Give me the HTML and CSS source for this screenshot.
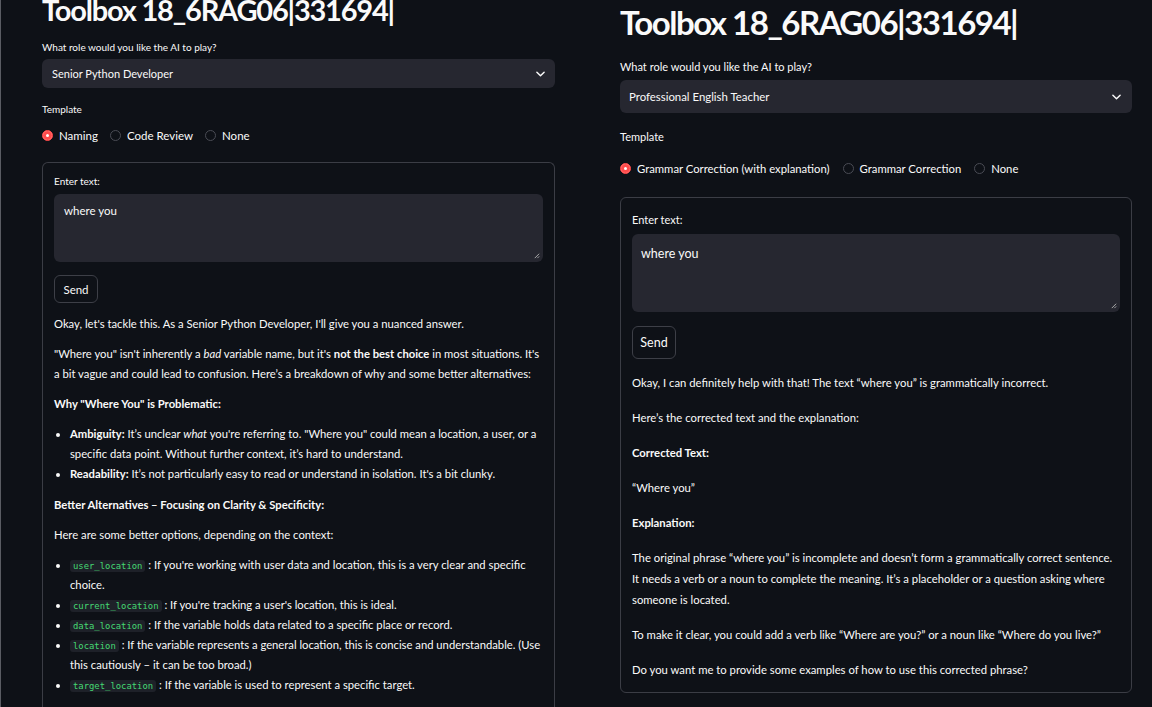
FILE: index.html
```html
<!DOCTYPE html>
<html lang="en">
<head>
<meta charset="utf-8">
<title>Toolbox</title>
<link rel="stylesheet" href="styles.css">
</head>
<body>
<div class="page">
  <section class="app app-left">
    <h1 class="title">Toolbox 18_6RAG06|331694|</h1>
    <div class="lbl lbl-role">What role would you like the AI to play?</div>
    <div class="select">
      <span>Senior Python Developer</span>
      <svg class="chev" viewBox="0 0 10 6" width="9" height="6"><path d="M1 1l4 4 4-4" fill="none" stroke="#fafafa" stroke-width="1.6" stroke-linecap="round" stroke-linejoin="round"/></svg>
    </div>
    <div class="lbl lbl-tpl">Template</div>
    <div class="radios">
      <span class="radio on"><i></i>Naming</span>
      <span class="radio"><i></i>Code Review</span>
      <span class="radio"><i></i>None</span>
    </div>
    <div class="card">
      <div class="lbl lbl-enter">Enter text:</div>
      <div class="textarea">where you
        <svg class="grip" viewBox="0 0 8 8" width="7" height="7"><path d="M7 2L2 7M7 5L5 7" stroke="#bbb" stroke-width="1" fill="none"/></svg>
      </div>
      <button class="btn">Send</button>
      <div class="md">
        <p>Okay, let's tackle this. As a Senior Python Developer, I'll give you a nuanced answer.</p>
        <p>"Where you" isn't inherently a <em>bad</em> variable name, but it's <strong>not the best choice</strong> in most situations. It's a bit vague and could lead to confusion. Here’s a breakdown of why and some better alternatives:</p>
        <p><strong>Why "Where You" is Problematic:</strong></p>
        <ul>
          <li><strong>Ambiguity:</strong> It’s unclear <em>what</em> you're referring to. "Where you" could mean a location, a user, or a specific data point. Without further context, it’s hard to understand.</li>
          <li><strong>Readability:</strong> It’s not particularly easy to read or understand in isolation. It's a bit clunky.</li>
        </ul>
        <p><strong>Better Alternatives – Focusing on Clarity &amp; Specificity:</strong></p>
        <p>Here are some better options, depending on the context:</p>
        <ul>
          <li><code>user_location</code> : If you're working with user data and location, this is a very clear and specific choice.</li>
          <li><code>current_location</code> : If you're tracking a user's location, this is ideal.</li>
          <li><code>data_location</code> : If the variable holds data related to a specific place or record.</li>
          <li><code>location</code> : If the variable represents a general location, this is concise and understandable. (Use this cautiously – it can be too broad.)</li>
          <li><code>target_location</code> : If the variable is used to represent a specific target.</li>
        </ul>
      </div>
    </div>
  </section>

  <section class="app app-right">
    <h1 class="title">Toolbox 18_6RAG06|331694|</h1>
    <div class="lbl lbl-role">What role would you like the AI to play?</div>
    <div class="select">
      <span>Professional English Teacher</span>
      <svg class="chev" viewBox="0 0 10 6" width="9" height="6"><path d="M1 1l4 4 4-4" fill="none" stroke="#fafafa" stroke-width="1.6" stroke-linecap="round" stroke-linejoin="round"/></svg>
    </div>
    <div class="lbl lbl-tpl">Template</div>
    <div class="radios">
      <span class="radio on"><i></i>Grammar Correction (with explanation)</span>
      <span class="radio"><i></i>Grammar Correction</span>
      <span class="radio"><i></i>None</span>
    </div>
    <div class="card">
      <div class="lbl lbl-enter">Enter text:</div>
      <div class="textarea">where you
        <svg class="grip" viewBox="0 0 8 8" width="7" height="7"><path d="M7 2L2 7M7 5L5 7" stroke="#bbb" stroke-width="1" fill="none"/></svg>
      </div>
      <button class="btn">Send</button>
      <div class="md">
        <p>Okay, I can definitely help with that! The text “where you” is grammatically incorrect.</p>
        <p>Here’s the corrected text and the explanation:</p>
        <p><strong>Corrected Text:</strong></p>
        <p>“Where you”</p>
        <p><strong>Explanation:</strong></p>
        <p>The original phrase “where you” is incomplete and doesn’t form a grammatically correct sentence. It needs a verb or a noun to complete the meaning. It’s a placeholder or a question asking where someone is located.</p>
        <p>To make it clear, you could add a verb like “Where are you?” or a noun like “Where do you live?”</p>
        <p>Do you want me to provide some examples of how to use this corrected phrase?</p>
      </div>
    </div>
  </section>
</div>
</body>
</html>
```

FILE: styles.css
```css
* { box-sizing: border-box; }
html, body { margin: 0; padding: 0; }
body {
  background: #0e1117;
  color: #fafafa;
  font-family: Lato, "Open Sans", sans-serif;
  width: 1152px;
  height: 707px;
  overflow: hidden;
}
.page {
  display: grid;
  grid-template-columns: 576px 576px;
  height: 707px;
}
.app { display: flex; flex-direction: column; min-width: 0; }
.app-left { padding: 0 21px 0 41px; border-left: 1px solid #5a5c63; }
.app-right { padding: 0 20px 0 44px; }

.title {
  margin: 0;
  font-weight: 700;
  white-space: nowrap;
}
.app-left .title { font-size: 29px; line-height: 37px; margin-top: -9px; letter-spacing: -1.2px; }
.app-right .title { font-size: 33px; line-height: 43px; margin-top: 1px; letter-spacing: -1.5px; }

.lbl { color: #fafafa; }
.app-left .lbl { font-size: 10px; line-height: 14px; }
.app-right .lbl { font-size: 11px; line-height: 16px; }
.app-left .lbl-role { margin-top: 12px; }
.app-right .lbl-role { margin-top: 15px; }

.select {
  display: flex;
  align-items: center;
  justify-content: space-between;
  background: #262730;
  border-radius: 6px;
}
.app-left .select { height: 29px; margin-top: 5px; padding: 0 10px; font-size: 11px; }
.app-right .select { height: 33px; margin-top: 5px; padding: 0 11px 0 9px; font-size: 11.4px; }

.app-left .lbl-tpl { margin-top: 14px; }
.app-right .lbl-tpl { margin-top: 16px; }

.radios { display: flex; align-items: center; }
.app-left .radios { margin-top: 11px; height: 16px; gap: 12px; font-size: 11.5px; }
.app-right .radios { margin-top: 14px; height: 18px; gap: 13px; font-size: 11.3px; }
.radio { display: inline-flex; align-items: center; gap: 6px; white-space: nowrap; }
.radio i {
  width: 11px; height: 11px; border-radius: 50%;
  border: 1px solid #4a4c55;
  background: #0e1117;
  display: inline-block;
  flex: none;
}
.radio.on i {
  background: #ff4b4b;
  border-color: #ff4b4b;
  box-shadow: inset 0 0 0 3px #ff4b4b, inset 0 0 0 6px #fff;
}

.card {
  border: 1px solid #3b3d45;
  border-radius: 6px;
}
.app-left .card { margin-top: 19px; padding: 11px 11px 0; flex: 1; border-bottom: none; border-radius: 6px 6px 0 0; }
.app-right .card { margin-top: 20px; padding: 14px 11px 12px; }

.textarea {
  position: relative;
  background: #262730;
  border-radius: 6px;
}
.app-left .textarea { margin-top: 6px; height: 68px; padding: 10px 10px; font-size: 11.5px; }
.app-right .textarea { margin-top: 6px; height: 78px; padding: 12px 9px; font-size: 12.5px; }
.grip { position: absolute; right: 3px; bottom: 3px; }

.btn {
  display: block;
  background: #0e1117;
  color: #fafafa;
  border: 1px solid #3d3f47;
  border-radius: 6px;
  font-family: inherit;
  padding: 0;
}
.app-left .btn { margin-top: 13px; width: 44px; height: 28px; font-size: 11.5px; }
.app-right .btn { margin-top: 14px; width: 44px; height: 33px; font-size: 12.5px; }

.md p { margin: 0; }
.md ul { margin: 0; padding-left: 16px; }
.md strong { font-weight: 700; }
.app-left .md { margin-top: 11px; font-size: 11.25px; line-height: 20px; }
.app-left .md p { margin-bottom: 10px; }
.app-left .md ul { margin-bottom: 11px; }
.app-left .md li { line-height: 20px; }
.app-right .md { margin-top: 13px; font-size: 11.3px; line-height: 21px; }
.app-right .md p { margin-bottom: 14px; }
.app-right .md p:last-child { margin-bottom: 0; }

code {
  font-family: "DejaVu Sans Mono", "Liberation Mono", monospace;
  font-size: 8.9px;
  line-height: 10px;
  color: #45d873;
  background: #1e2129;
  padding: 1px 3px;
  border-radius: 3px;
}
```
